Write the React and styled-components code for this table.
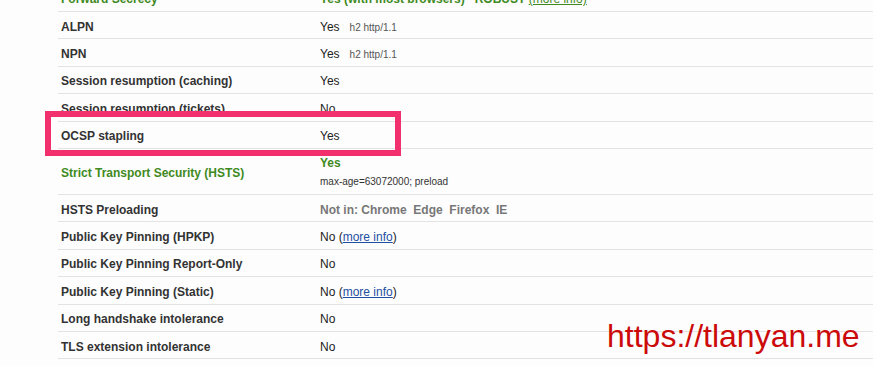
import React from 'react';
import styled, {createGlobalStyle} from 'styled-components';

const GlobalStyle = createGlobalStyle`
  body {
    margin: 0;
    background: #fdfdfd;
    font-family: "Liberation Sans", Arial, Helvetica, sans-serif;
  }
`;

const rows = [
  {label: 'Forward Secrecy', green: true, value: 'forward'},
  {label: 'ALPN', value: 'Yes', note: 'h2 http/1.1'},
  {label: 'NPN', value: 'Yes', note: 'h2 http/1.1'},
  {label: 'Session resumption (caching)', value: 'Yes'},
  {label: 'Session resumption (tickets)', value: 'No'},
  {label: 'OCSP stapling', value: 'Yes'},
  {label: 'Strict Transport Security (HSTS)', green: true, value: 'hsts', tall: true},
  {label: 'HSTS Preloading', value: 'preload'},
  {label: 'Public Key Pinning (HPKP)', value: 'No', link: true},
  {label: 'Public Key Pinning Report-Only', value: 'No'},
  {label: 'Public Key Pinning (Static)', value: 'No', link: true},
  {label: 'Long handshake intolerance', value: 'No'},
  {label: 'TLS extension intolerance', value: 'No'},
];

const renderValue = (row) => {
  if (row.value === 'forward') {
    return (
      <GreenText>
        Yes (with most browsers)&nbsp;&nbsp; ROBUST <GreenLink>(more info)</GreenLink>
      </GreenText>
    );
  }
  if (row.value === 'hsts') {
    return (
      <Stack>
        <GreenText>Yes</GreenText>
        <Small>max-age=63072000; preload</Small>
      </Stack>
    );
  }
  if (row.value === 'preload') {
    return <Muted>Not in: Chrome&nbsp; Edge&nbsp; Firefox&nbsp; IE</Muted>;
  }
  return (
    <span>
      {row.value}
      {row.note && <Note>{row.note}</Note>}
      {row.link && (
        <>
          {' ('}
          <MoreInfo href="#">more info</MoreInfo>)
        </>
      )}
    </span>
  );
};

const App = () => {
  return (
    <Page>
      <GlobalStyle />
      <Table>
        {rows.map((row) => (
          <Row key={row.label} tall={row.tall}>
            <Label green={row.green}>{row.label}</Label>
            <Value>{renderValue(row)}</Value>
          </Row>
        ))}
      </Table>
      <Highlight />
      <Watermark>https://tlanyan.me</Watermark>
    </Page>
  );
};

const Page = styled.div`
  position: relative;
  height: 366px;
  overflow: hidden;
  background: #fdfdfd;
`;

const Table = styled.div`
  margin: -15.4px 0 0 58px;
  display: flex;
  flex-direction: column;
`;

const Row = styled.div`
  display: grid;
  grid-template-columns: 262px 1fr;
  align-items: center;
  height: ${(p) => (p.tall ? '46px' : '27.4px')};
  padding-top: 3px;
  box-sizing: border-box;
  border-bottom: 1px solid #e3e3e3;
`;

const Label = styled.div`
  padding-left: 3px;
  font-size: 12px;
  font-weight: bold;
  color: ${(p) => (p.green ? '#3f8a22' : '#333')};
`;

const Value = styled.div`
  font-size: 12px;
  color: #222;
`;

const GreenText = styled.span`
  font-weight: bold;
  color: #3f8a22;
  line-height: 14px;
`;

const GreenLink = styled.span`
  font-weight: normal;
  text-decoration: underline;
`;

const Stack = styled.div`
  display: flex;
  flex-direction: column;
  gap: 6px;
  margin-top: -2px;
`;

const Small = styled.span`
  font-size: 10px;
  line-height: 12px;
  color: #333;
`;

const Note = styled.span`
  margin-left: 10px;
  font-size: 10px;
  color: #555;
`;

const Muted = styled.span`
  font-weight: bold;
  color: #777;
`;

const MoreInfo = styled.a`
  color: #1d4fa3;
  text-decoration: underline;
`;

const Highlight = styled.div`
  position: absolute;
  left: 45px;
  top: 111px;
  width: 356px;
  height: 45px;
  box-sizing: border-box;
  border: 6px solid #f2306e;
`;

const Watermark = styled.div`
  position: absolute;
  left: 607px;
  top: 320px;
  font-size: 32px;
  line-height: 32px;
  color: #cc0a0a;
`;

export default App;
